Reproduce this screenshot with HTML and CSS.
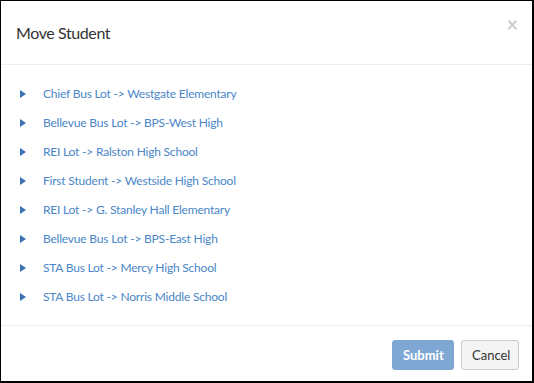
FILE: index.html
```html
<!DOCTYPE html>
<html>
<head>
	<title>Move Student</title>
	<link rel="stylesheet" href="styles.css">
</head>
<body>
	<div class="modal">
		<div class="modal-header">
			<h4 class="modal-title">Move Student</h4>
			<span class="close">&times;</span>
		</div>
		<div class="modal-body">
			<ul class="routes">
				<li><a href="#">Chief Bus Lot -&gt; Westgate Elementary</a></li>
				<li><a href="#">Bellevue Bus Lot -&gt; BPS-West High</a></li>
				<li><a href="#">REI Lot -&gt; Ralston High School</a></li>
				<li><a href="#">First Student -&gt; Westside High School</a></li>
				<li><a href="#">REI Lot -&gt; G. Stanley Hall Elementary</a></li>
				<li><a href="#">Bellevue Bus Lot -&gt; BPS-East High</a></li>
				<li><a href="#">STA Bus Lot -&gt; Mercy High School</a></li>
				<li><a href="#">STA Bus Lot -&gt; Norris Middle School</a></li>
			</ul>
		</div>
		<div class="modal-footer">
			<button class="btn btn-primary" disabled>Submit</button>
			<button class="btn btn-default">Cancel</button>
		</div>
	</div>
</body>
</html>
```
FILE: styles.css
```css
html, body {
	margin : 0;
	padding : 0;
	background : #fff;
}

body {
	font-family : Lato, "Liberation Sans", sans-serif;
	font-size : 14px;
	color : #333;
}

.modal {
	width : 531px;
	height : 380px;
	border : 1px solid #000;
	border-right-width : 2px;
	border-bottom-width : 2px;
	display : flex;
	flex-direction : column;
}

.modal-header {
	display : flex;
	justify-content : space-between;
	align-items : flex-start;
	padding : 18px 14px 17px 15px;
	border-bottom : 1px solid #eee;
}

.modal-title {
	margin : 0;
	font-size : 16px;
	font-weight : normal;
	letter-spacing : -0.4px;
	line-height : 28px;
	color : #333;
}

.close {
	font-size : 20px;
	font-weight : bold;
	line-height : 12px;
	color : #000;
	opacity : 0.2;
	margin-top : -1px;
}

.modal-body {
	flex : 1;
	padding : 14px 15px 14px 19px;
	border-bottom : 1px solid #eee;
}

.routes {
	list-style : none;
	margin : 0;
	padding : 0;
}

.routes li {
	display : flex;
	align-items : center;
	height : 29px;
}

.routes li:before {
	content : "";
	width : 0;
	height : 0;
	border-top : 4px solid transparent;
	border-bottom : 4px solid transparent;
	border-left : 6px solid #3b72b4;
	margin-right : 17px;
}

.routes a {
	color : #4a86c8;
	text-decoration : none;
	font-size : 12px;
	letter-spacing : -0.2px;
}

.modal-footer {
	display : flex;
	justify-content : flex-end;
	gap : 7px;
	padding : 14px 13px 14px 15px;
}

.btn {
	font-family : inherit;
	font-size : 13px;
	height : 30px;
	padding : 0 10px;
	border-radius : 3px;
	border : 1px solid #ccc;
}

.btn-primary {
	background : #7ea7d3;
	border-color : #7ea7d3;
	color : #fff;
	font-weight : bold;
	width : 62px;
}

.btn-default {
	background : #f4f4f4;
	color : #333;
	width : 58px;
}
```
